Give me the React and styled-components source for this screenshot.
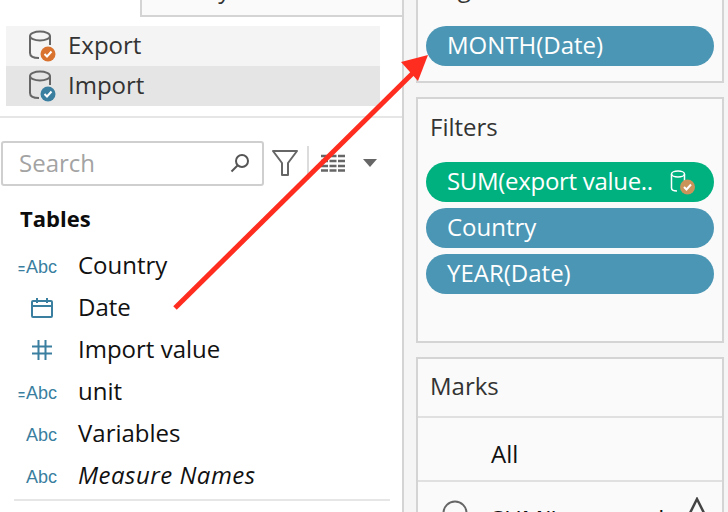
import React from "react";
import styled, { createGlobalStyle } from "styled-components";

const Global = createGlobalStyle`
  html, body { margin: 0; padding: 0; background: #f5f5f5; }
  * { box-sizing: border-box; }
`;
const Page = styled.div`
  position: relative; width: 728px; height: 512px; overflow: hidden; display: flex;
  font-family: "Open Sans", "Noto Sans", sans-serif; color: #111; background: #f5f5f5;
`;
const Left = styled.div`
  width: 404px; flex: none; height: 512px; overflow: hidden; background: #fff;
  border-right: 2px solid #d4d4d4;
`;
const TopTab = styled.div`
  height: 17px; margin-left: 140px; background: #fafafa;
  border-left: 2px solid #d4d4d4; border-bottom: 2px solid #d4d4d4;
  display: flex; align-items: flex-end; overflow: hidden;
  font-size: 24px; line-height: 30px; padding-left: 27px; color: #333;
`;
const TabText = styled.span`
  margin-bottom: 11px;
`;
const SourceList = styled.div`
  margin: 9px 0 0 6px; width: 374px; display: flex; flex-direction: column;
`;
const SourceRow = styled.div`
  height: 40px; display: flex; align-items: center; padding-left: 22px; gap: 12px;
  background: ${p => (p.$active ? "#e5e5e5" : "#f4f4f4")};
  font-size: 24px; color: #333;
`;
const Label = styled.span`
  margin-bottom: ${p => p.$mb ?? 4}px; white-space: nowrap;
  letter-spacing: ${p => p.$ls || 0}px;
`;
const Divider = styled.div`
  height: 2px; background: #e6e6e6; margin: ${p => p.$m};
`;
const SearchRow = styled.div`
  display: flex; align-items: center; margin-top: 22px; padding-left: 1px; height: 46px;
`;
const SearchBox = styled.div`
  width: 263px; height: 45px; border: 2px solid #cfcfcf; border-radius: 3px; display: flex;
  align-items: center; justify-content: space-between; padding: 0 12px 0 16px;
  font-size: 24px; color: #a3a3a3;
`;
const Tool = styled.div`
  display: flex; align-items: center; justify-content: center; margin-left: ${p => p.$ml}px; flex: none;
`;
const Sep = styled.div`
  width: 2px; height: 34px; background: #dcdcdc; margin-left: 9px;
`;
const Heading = styled.div`
  margin: 18px 0 0 20px; font-size: 22px; font-weight: 700; line-height: 28px; color: #0c0c0c;
`;
const Fields = styled.div`
  margin-top: 13px; display: flex; flex-direction: column;
`;
const Field = styled.div`
  height: 42px; display: flex; align-items: center; font-size: 24px;
  font-style: ${p => (p.$italic ? "italic" : "normal")}; color: #111;
`;
const TypeCell = styled.div`
  width: 78px; flex: none; display: flex; align-items: center; justify-content: ${p => (p.$center ? "center" : "flex-end")};
  padding: ${p => (p.$center ? "0 0 0 6px" : "2px 21px 0 0")};
  font-family: "Liberation Sans", Arial, sans-serif; font-size: 18px; font-style: normal; color: #3a7f9f;
`;
const EqSign = styled.span`
  font-size: 12px; font-weight: 700; margin-right: 1px;
`;
const CutText = styled.div`
  margin: 9px 0 0 78px; font-size: 24px; line-height: 30px; color: #555; white-space: nowrap;
`;
const Right = styled.div`
  flex: none; width: 308px; margin-left: 12px; display: flex; flex-direction: column; gap: 14px;
`;
const Card = styled.div`
  flex: none; height: ${p => p.$h}px; background: #fafafa; border: 2px solid #d4d4d4;
  ${p => p.$cut && "border-top: none; justify-content: flex-end;"}
  display: flex; flex-direction: column; overflow: hidden; padding: ${p => p.$pad || "0"};
`;
const CardTitle = styled.div`
  font-size: 24px; line-height: 30px; color: #333; padding-left: 12px; flex: none;
`;
const Pills = styled.div`
  display: flex; flex-direction: column; gap: 6px; padding: 0 8px; flex: none;
  margin-top: ${p => p.$mt || 0}px;
`;
const Pill = styled.div`
  height: 40px; border-radius: 20px; background: ${p => p.$c || "#4b96b4"}; color: #fff;
  font-size: 24px; display: flex; align-items: center; justify-content: space-between; padding: 0 18px 0 21px; flex: none;
`;
const MarksHead = styled.div`
  height: 59px; flex: none; display: flex; align-items: center; padding-left: 12px;
  font-size: 24px; color: #333; border-bottom: 2px solid #e0e0e0;
`;
const MarksAll = styled.div`
  height: 64px; flex: none; display: flex; align-items: center; padding: 8px 0 0 73px;
  font-size: 24px; color: #111; border-bottom: 2px solid #e0e0e0;
`;
const MarksRow = styled.div`
  height: 60px; flex: none; display: flex; align-items: flex-start; padding: 18px 14px 0 24px;
  font-size: 24px; color: #111; gap: 23px;
`;
const MarkCircle = styled.svg`
  flex: none;
`;
const MarkText = styled.span`
  flex: 1; min-width: 0; overflow: hidden; margin-top: 2px; white-space: nowrap;
`;
const MarkShape = styled.svg`
  margin-top: -3px; margin-left: -8px; flex: none;
`;
const Arrow = styled.svg`
  position: absolute; left: 0; top: 0; pointer-events: none;
`;

const Db = ({ badge }) => (
  <svg width="28" height="34" viewBox="0 0 28 34" fill="none">
    <ellipse cx="12" cy="7" rx="10" ry="4.5" stroke="#666" strokeWidth="2" />
    <path d="M2 7 V24 C2 27 5 29 11 29 M22 7 V16" stroke="#666" strokeWidth="2" />
    <circle cx="20" cy="25" r="7.5" fill={badge} />
    <path d="M16.5 25 L19 27.5 L23.5 22.5" stroke="#fff" strokeWidth="2" fill="none" />
  </svg>
);

const PillDb = () => (
  <svg width="26" height="26" viewBox="0 0 26 26" fill="none">
    <ellipse cx="8" cy="5" rx="6.5" ry="3" stroke="#fff" strokeWidth="1.5" />
    <path d="M1.5 5 V19 C1.5 21 4 22 7 22 M14.5 5 V12" stroke="#fff" strokeWidth="1.5" />
    <circle cx="17.5" cy="18" r="7.5" fill="#c9935a" />
    <path d="M14 18 L16.5 20.5 L21 15.5" stroke="#fff" strokeWidth="2" fill="none" />
  </svg>
);

const Abc = ({ eq }) => <span>{eq && <EqSign>=</EqSign>}Abc</span>;

const fields = [
  { t: <Abc eq />, n: "Country" },
  { n: "Date", c: true, t: (
    <svg width="22" height="20" viewBox="0 0 22 20" fill="none" stroke="#3a7f9f" strokeWidth="2">
      <rect x="1" y="3" width="20" height="16" rx="1" /><path d="M1 8 H21 M6 0 V5 M16 0 V5" />
    </svg>) },
  { n: "Import value", c: true, t: (
    <svg width="20" height="20" viewBox="0 0 20 20" fill="none" stroke="#3a7f9f" strokeWidth="2">
      <path d="M0 6.5 H20 M0 13.5 H20 M6.5 0 V20 M13.5 0 V20" />
    </svg>) },
  { t: <Abc eq />, n: "unit" },
  { t: <Abc />, n: "Variables" },
  { t: <Abc />, n: "Measure Names", i: true, ls: 0.5 },
];

export default function App() {
  return (
    <Page>
      <Global />
      <Left>
        <TopTab><TabText>Analytics</TabText></TopTab>
        <SourceList>
          <SourceRow><Db badge="#d9722f" /><Label>Export</Label></SourceRow>
          <SourceRow $active><Db badge="#3a7f9f" /><Label>Import</Label></SourceRow>
        </SourceList>
        <Divider $m="10px 0 0 0" />
        <SearchRow>
          <SearchBox>
            <Label $mb={1}>Search</Label>
            <svg width="20" height="20" viewBox="0 0 20 20" fill="none" stroke="#555" strokeWidth="2">
              <circle cx="12" cy="8" r="6" /><path d="M7.5 12.5 L1.5 18.5" />
            </svg>
          </SearchBox>
          <Tool $ml={8}>
            <svg width="26" height="28" viewBox="0 0 26 28" fill="none" stroke="#666" strokeWidth="2" strokeLinejoin="round">
              <path d="M1 2 H25 L16 14 V26 H10 V14 Z" />
            </svg>
          </Tool>
          <Sep />
          <Tool $ml={12}>
            <svg width="24" height="18" viewBox="0 0 24 18" fill="none" stroke="#666" strokeWidth="2.5" strokeDasharray="7 1.5">
              <path d="M0 2 H24 M0 7 H24 M0 12 H24 M0 16.5 H24" />
            </svg>
          </Tool>
          <Tool $ml={17}>
            <svg width="16" height="10" viewBox="0 0 16 10"><path d="M1 1 H15 L8 9 Z" fill="#666" /></svg>
          </Tool>
        </SearchRow>
        <Heading>Tables</Heading>
        <Fields>
          {fields.map(f => (
            <Field key={f.n} $italic={f.i}>
              <TypeCell $center={f.c}>{f.t}</TypeCell>
              <Label $ls={f.ls}>{f.n}</Label>
            </Field>
          ))}
        </Fields>
        <Divider $m="2px 12px 0 14px" />
        <CutText>Longitude (generated)</CutText>
      </Left>
      <Right>
        <Card $cut $h={83} $pad="0 0 15px 0">
          <CardTitle>Pages</CardTitle>
          <Pills $mt={23}><Pill><Label>MONTH(Date)</Label></Pill></Pills>
        </Card>
        <Card $h={246} $pad="13px 0 0 0">
          <CardTitle>Filters</CardTitle>
          <Pills $mt={20}>
            <Pill $c="#00b180">
              <Label $ls={-0.3}>SUM(export value..</Label>
              <PillDb />
            </Pill>
            <Pill><Label>Country</Label></Pill>
            <Pill><Label>YEAR(Date)</Label></Pill>
          </Pills>
        </Card>
        <Card $h={170}>
          <MarksHead><Label>Marks</Label></MarksHead>
          <MarksAll>All</MarksAll>
          <MarksRow>
            <MarkCircle width="26" height="26" viewBox="0 0 26 26" fill="none" stroke="#666" strokeWidth="2"><circle cx="13" cy="13" r="11.5" /></MarkCircle>
            <MarkText>SUM(Import val</MarkText>
            <MarkShape width="22" height="22" viewBox="0 0 22 22" fill="none" stroke="#444" strokeWidth="2.5"><path d="M11 2 L20 20 H2 Z" /></MarkShape>
          </MarksRow>
        </Card>
      </Right>
      <Arrow width="728" height="512" viewBox="0 0 728 512">
        <path d="M175 308 L416 70" stroke="#ff2d20" strokeWidth="5" fill="none" />
        <polygon points="428,55 401,62 418,81" fill="#ff2d20" />
      </Arrow>
    </Page>
  );
}
